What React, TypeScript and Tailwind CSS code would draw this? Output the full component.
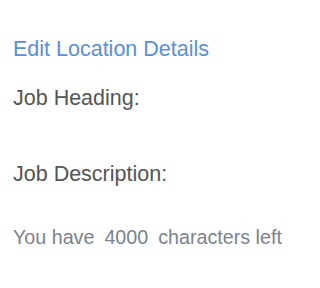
export default function App() {
  return (
    <div className="w-[288px] h-[288px] bg-white pl-[13px] pt-[37px]" style={{ fontFamily: '"Liberation Sans", Arial, sans-serif' }}>
      <div className="text-[21.5px] leading-[24px] text-[#5a8fdc] whitespace-nowrap">Edit Location Details</div>
      <div className="mt-[25px] text-[21.5px] leading-[24px] text-[#555555]">Job Heading:</div>
      <div className="mt-[52px] text-[21.5px] leading-[24px] text-[#555555]">Job Description:</div>
      <div className="mt-[39px] text-[19.7px] leading-[24px] text-[#7b8290] whitespace-nowrap">
        You have<span className="ml-[10px]">4000</span>
        <span className="ml-[10px]">characters left</span>
      </div>
    </div>
  );
}
